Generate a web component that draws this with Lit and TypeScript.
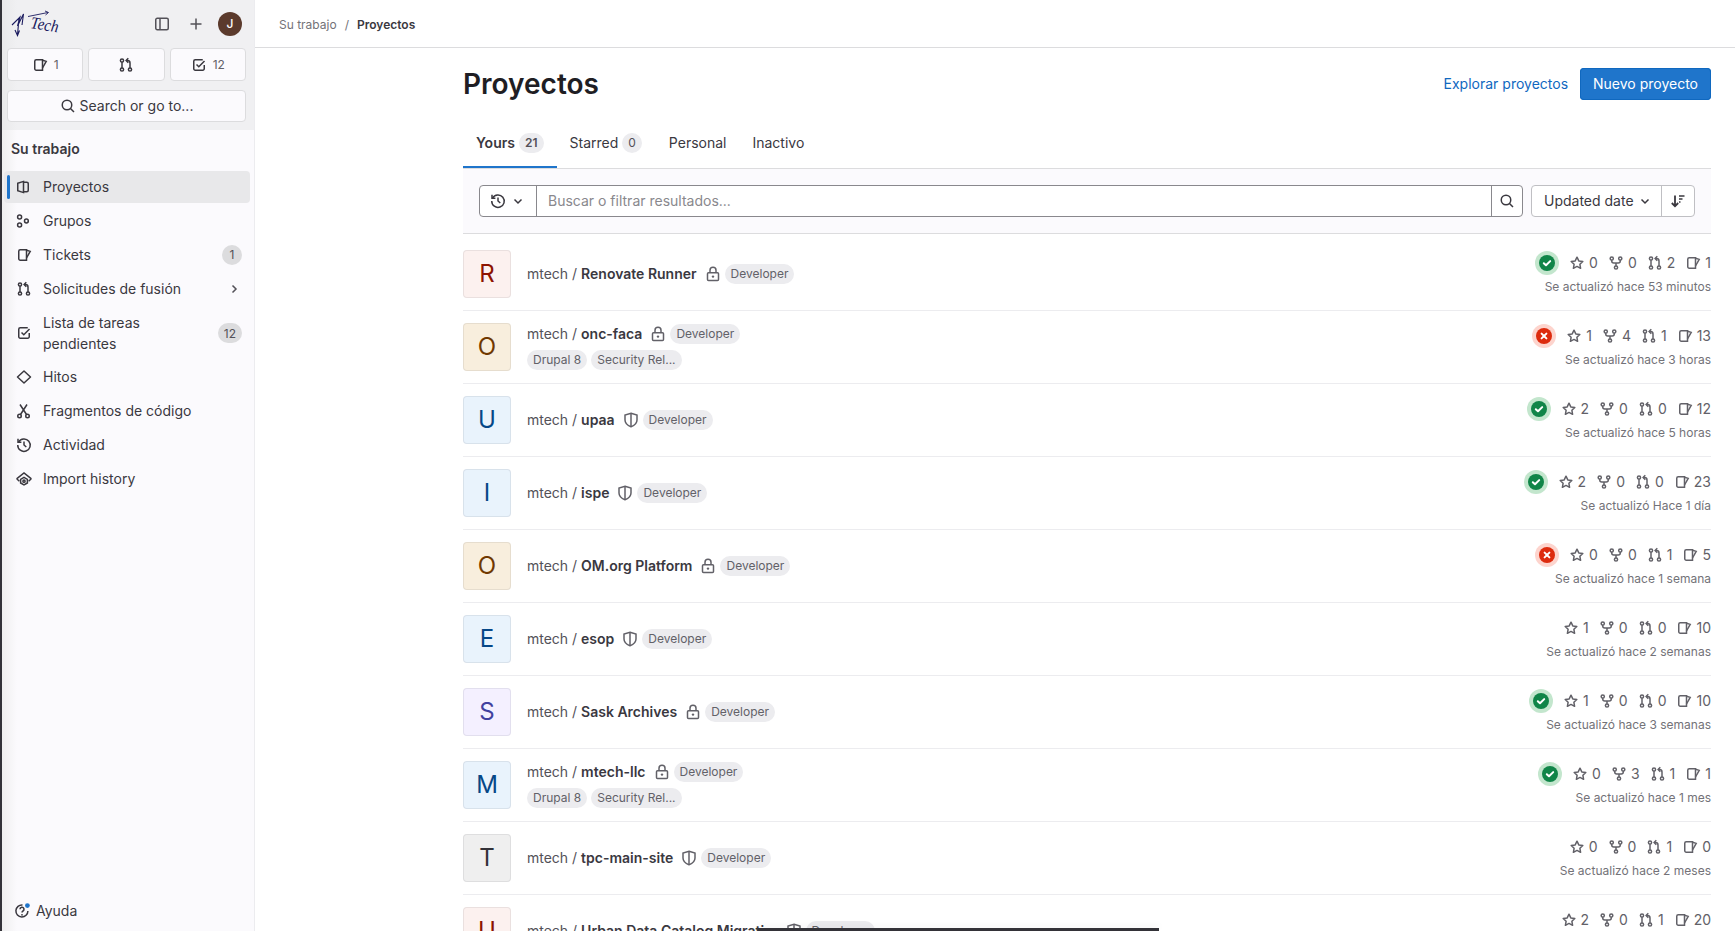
import { LitElement, html, css, svg, nothing } from "lit";
import { customElement } from "lit/decorators.js";

const ICONS: Record<string, unknown> = {
  issues: svg`<path d="M4.25 2.75H10.5V13.25H4.25A1.5 1.5 0 0 1 2.75 11.75V4.25A1.5 1.5 0 0 1 4.25 2.75Z"/><path d="M10.5 3.2L14.2 4.4 10.5 11"/>`,
  merge: svg`<circle cx="4" cy="3.5" r="1.6"/><circle cx="4" cy="12.5" r="1.6"/><path d="M4 5.1v5.8"/><circle cx="12" cy="12.5" r="1.6"/><path d="M12 10.9V6a2.5 2.5 0 0 0-2.5-2.5H8.5"/><path d="M10.3 1.3L8.1 3.5l2.2 2.2"/>`,
  todo: svg`<path d="M13.25 8v3.75a1.5 1.5 0 0 1-1.5 1.5h-7.5a1.5 1.5 0 0 1-1.5-1.5v-7.5a1.5 1.5 0 0 1 1.5-1.5h7.5"/><path d="M5.5 7.5l2.3 2.3 5.7-5.8"/>`,
  project: svg`<path d="M1.75 4.2L7.5 2.4v11.2l-5.75-1.8z"/><path d="M7.5 3.2h3.25a1.5 1.5 0 0 1 1.5 1.5v6.6a1.5 1.5 0 0 1-1.5 1.5H7.5"/>`,
  group: svg`<circle cx="3.6" cy="4" r="2"/><circle cx="3.6" cy="12" r="2"/><circle cx="10.4" cy="8" r="1.9"/>`,
  milestone: svg`<path d="M8 2L14.5 8 8 14 1.5 8z" stroke-linejoin="round"/>`,
  snippet: svg`<circle cx="3.5" cy="13" r="1.75"/><circle cx="11.5" cy="13" r="1.75"/><path d="M4.5 11.5L11 1.5M10.5 11.5L4 1.5"/>`,
  history: svg`<path d="M2.6 5A6.25 6.25 0 1 1 1.75 8"/><path d="M2 1.8v3.4h3.4"/><path d="M8 4.5V8l2.3 2"/>`,
  import: svg`<path d="M3.4 10.2L1.2 8.2a.6.6 0 0 1 0-.9L8 2l6.8 5.3a.6.6 0 0 1 0 .9l-2.200 2"/><path d="M8 6.4l3.4 2v3.6L8 14l-3.4-2V8.4z"/><circle cx="8" cy="10.2" r="1.1"/>`,
  search: svg`<circle cx="7" cy="7" r="4.75"/><path d="M10.5 10.5L14 14"/>`,
  sidebar: svg`<rect x="1.75" y="2.25" width="12.5" height="11.5" rx="1.5"/><path d="M6 2.5v11"/>`,
  plus: svg`<path d="M8 2.5v11M2.5 8h11"/>`,
  star: svg`<path d="M8 2.2l1.8 3.7 4 .6-2.9 2.8.7 4L8 11.4l-3.6 1.9.7-4L2.2 6.5l4-.6z" stroke-linejoin="round"/>`,
  fork: svg`<circle cx="3.75" cy="3.5" r="1.6"/><circle cx="12.25" cy="3.5" r="1.6"/><circle cx="8" cy="12.5" r="1.6"/><path d="M3.75 5.1V6a2 2 0 0 0 2 2h4.5a2 2 0 0 0 2-2v-.9M8 8v2.9"/>`,
  lock: svg`<rect x="2.5" y="6.75" width="11" height="7.75" rx="1"/><path d="M5 6.75V4.25a3 3 0 0 1 6 0v2.5"/><circle cx="8" cy="10.6" r="1.2" fill="currentColor" stroke="none"/>`,
  shield: svg`<path d="M8 1.2l6 1.9V8c0 3.2-2.5 5.4-6 6.8C4.5 13.4 2 11.200 2 8V3.100z"/><path d="M8 1.500v13"/>`,
  chevronDown: svg`<path d="M4.5 6.5L8 10l3.5-3.5"/>`,
  chevronRight: svg`<path d="M6.5 4.5L10 8l-3.5 3.5"/>`,
  sort: svg`<path d="M5 2.5V13.2M1.8 10l3.2 3.2L8.2 10" stroke-width="1.8"/><path d="M9 3h5.5M9 6h3.500M9 9h1.500"/>`,
  help: svg`<path d="M13.9 8A6 6 0 1 1 8.5 2"/><path d="M6 6.3a2 2 0 1 1 3 1.7c-.7.4-1 .8-1 1.6"/><circle cx="8" cy="11.8" r=".9" fill="currentColor" stroke="none"/><circle cx="13.4" cy="2.6" r="2.4" fill="#1f75cb" stroke="none"/>`,
};

const icon = (name: string) =>
  html`<svg class="icon" viewBox="0 0 16 16" fill="none" stroke="currentColor" stroke-width="1.5" aria-hidden="true">${ICONS[name]}</svg>`;

const NAV = [
  { label: "Proyectos", icon: "project", active: true },
  { label: "Grupos", icon: "group" },
  { label: "Tickets", icon: "issues", count: "1" },
  { label: "Solicitudes de fusión", icon: "merge", chevron: true },
  { label: "Lista de tareas pendientes", icon: "todo", count: "12" },
  { label: "Hitos", icon: "milestone" },
  { label: "Fragmentos de código", icon: "snippet" },
  { label: "Actividad", icon: "history" },
  { label: "Import history", icon: "import" },
];

const TAGS = ["Drupal 8", "Security Rel..."];

const PROJECTS = [
  { name: "Renovate Runner", tone: "red", vis: "lock", status: "ok", stats: [0, 0, 2, 1], time: "hace 53 minutos" },
  { name: "onc-faca", tone: "orange", vis: "lock", tags: TAGS, status: "fail", stats: [1, 4, 1, 13], time: "hace 3 horas" },
  { name: "upaa", tone: "blue", vis: "shield", status: "ok", stats: [2, 0, 0, 12], time: "hace 5 horas" },
  { name: "ispe", tone: "blue", vis: "shield", status: "ok", stats: [2, 0, 0, 23], time: "Hace 1 día" },
  { name: "OM.org Platform", tone: "orange", vis: "lock", status: "fail", stats: [0, 0, 1, 5], time: "hace 1 semana" },
  { name: "esop", tone: "blue", vis: "shield", stats: [1, 0, 0, 10], time: "hace 2 semanas" },
  { name: "Sask Archives", tone: "purple", vis: "lock", status: "ok", stats: [1, 0, 0, 10], time: "hace 3 semanas" },
  { name: "mtech-llc", tone: "blue", vis: "lock", tags: TAGS, status: "ok", stats: [0, 3, 1, 1], time: "hace 1 mes" },
  { name: "tpc-main-site", tone: "grey", vis: "shield", stats: [0, 0, 1, 0], time: "hace 2 meses" },
  { name: "Urban Data Catalog Migrati...", tone: "red", vis: "shield", stats: [2, 0, 1, 20], time: "hace 2 meses" },
];

const STAT_ICONS = ["star", "fork", "merge", "issues"];

@customElement("app-root")
export class AppRoot extends LitElement {
  static styles = css`
    :host {
      display: flex;
      height: 100vh;
      overflow: hidden;
      position: relative;
      background: #fff;
      color: #3a383f;
      font-family: Inter, "Noto Sans", sans-serif;
      font-size: 14px;
      line-height: 20px;
    }
    .icon {
      display: block;
      flex: none;
      width: 16px;
      height: 16px;
    }

    /* sidebar */
    .sidebar {
      flex: none;
      box-sizing: border-box;
      width: 255px;
      display: flex;
      flex-direction: column;
      border-left: 2px solid #333238;
      border-right: 1px solid #ececef;
      background: linear-gradient(90deg, #efefef 0, #fbfafd 15px) #fbfafd;
    }
    .side-top {
      height: 130px;
      box-sizing: border-box;
      padding: 0 8px 0 5px;
      background: linear-gradient(90deg, #e9e9ea 0, #f0f0f2 15px) #f0f0f2;
    }
    .brand {
      display: flex;
      align-items: center;
      height: 48px;
      color: #535158;
    }
    .logo {
      width: 52px;
      height: 32px;
      margin-left: 3px;
      margin-right: auto;
      color: #1a1a5e;
    }
    .brand-btn {
      margin-right: 18px;
    }
    .brand-btn + .brand-btn {
      margin-right: 14px;
    }
    .user {
      width: 24px;
      height: 24px;
      margin-right: 4px;
      border-radius: 50%;
      background: #5b3a2c;
      color: #fff;
      font-size: 12px;
      font-weight: 500;
      display: grid;
      place-items: center;
    }
    .counters {
      display: grid;
      grid-template-columns: repeat(3, 1fr);
      gap: 5px;
    }
    .counter,
    .search {
      box-sizing: border-box;
      display: flex;
      align-items: center;
      justify-content: center;
      background: #fbfafd;
      border: 1px solid #dcdcde;
      border-radius: 4px;
    }
    .counter {
      height: 33px;
      gap: 6px;
      font-size: 12px;
      color: #626168;
    }
    .counter .icon {
      color: #3a383f;
    }
    .search {
      height: 32px;
      margin-top: 9px;
      gap: 4px;
      color: #3a383f;
    }
    .nav-title {
      margin: 9px 0 0 9px;
      font-weight: 600;
      height: 24px;
      line-height: 20px;
    }
    .nav {
      display: flex;
      flex-direction: column;
      gap: 2px;
      margin: 8px 4px 0 2px;
    }
    .item {
      display: flex;
      align-items: center;
      min-height: 32px;
      padding: 0 8px 0 12px;
      border-radius: 4px;
      gap: 11px;
      position: relative;
    }
    .item.two {
      padding-block: 5px;
      line-height: 21px;
    }
    .item.active {
      background: #e8e8ea;
    }
    .item.active::before {
      content: "";
      position: absolute;
      left: 3px;
      top: 4px;
      bottom: 4px;
      width: 3px;
      border-radius: 2px;
      background: #1f75cb;
    }
    .item-label {
      flex: 1;
    }
    .nav-count {
      min-width: 20px;
      box-sizing: border-box;
      height: 20px;
      padding: 0 6px;
      border-radius: 10px;
      background: #dcdcde;
      font-size: 12px;
      color: #535158;
      text-align: center;
    }
    .chev {
      color: #535158;
    }
    .help {
      margin: auto 0 0 12px;
      height: 40px;
      display: flex;
      align-items: center;
      gap: 6px;
    }

    /* main */
    .main {
      flex: 1;
      min-width: 0;
      display: flex;
      flex-direction: column;
      overflow: hidden;
    }
    .crumbs {
      flex: none;
      box-sizing: border-box;
      height: 48px;
      padding: 2px 0 0 24px;
      border-bottom: 1px solid #dcdcde;
      display: flex;
      align-items: center;
      gap: 8px;
      font-size: 12px;
      color: #737278;
    }
    .crumbs b {
      font-weight: 600;
      color: #3a383f;
    }
    .content {
      width: 1248px;
      margin-left: auto;
      margin-right: 24px;
    }
    .title-row {
      height: 77px;
      display: flex;
      align-items: center;
      padding-bottom: 6px;
      box-sizing: border-box;
    }
    h1 {
      margin: 0 auto 0 0;
      font-size: 28px;
      line-height: 36px;
      font-weight: 600;
      color: #1f1e24;
    }
    .explore {
      color: #1068bf;
      margin-right: 12px;
    }
    .primary {
      height: 32px;
      padding: 0 13px;
      display: flex;
      align-items: center;
      border-radius: 4px;
      background: #1f75cb;
      box-shadow: inset 0 0 0 1px #1068bf;
      color: #fff;
    }
    .tabs {
      display: flex;
      height: 44px;
      box-sizing: border-box;
      border-bottom: 1px solid #dcdcde;
    }
    .tab {
      display: flex;
      align-items: center;
      gap: 4px;
      padding: 0 13px 8px;
      height: 43px;
      box-sizing: border-box;
    }
    .tab:nth-child(2) {
      padding-right: 14px;
    }
    .tab.active {
      font-weight: 600;
      box-shadow: inset 0 -2px 0 #1f75cb;
    }
    .pill {
      border-radius: 10px;
      background: #ececef;
      font-size: 12px;
      font-weight: 400;
      color: #535158;
      height: 20px;
      padding: 0 6px;
    }
    .tab.active .pill {
      font-weight: 600;
    }
    .filter-bar {
      display: flex;
      align-items: center;
      gap: 8px;
      height: 65px;
      box-sizing: border-box;
      padding: 0 16px;
      background: #fbfafd;
      border-bottom: 1px solid #dcdcde;
    }
    .filter {
      flex: 1;
      display: flex;
      height: 32px;
      box-sizing: border-box;
      background: #fff;
      border: 1px solid #89888d;
      border-radius: 4px;
    }
    .recent {
      width: 56px;
      flex: none;
      display: flex;
      align-items: center;
      justify-content: center;
      gap: 4px;
      border-right: 1px solid #89888d;
    }
    .placeholder {
      flex: 1;
      padding-left: 11px;
      line-height: 30px;
      color: #89888d;
    }
    .go {
      width: 31px;
      box-sizing: border-box;
      flex: none;
      display: grid;
      place-items: center;
      border-left: 1px solid #89888d;
    }
    .sort {
      display: flex;
      height: 32px;
      box-sizing: border-box;
      background: #fff;
      border: 1px solid #bfbfc3;
      border-radius: 4px;
    }
    .sort-by {
      display: flex;
      align-items: center;
      justify-content: space-between;
      padding: 0 8px 0 12px;
      width: 130px;
      box-sizing: border-box;
      white-space: nowrap;
      border-right: 1px solid #bfbfc3;
    }
    .sort-dir {
      width: 32px;
      display: grid;
      place-items: center;
    }

    /* project rows */
    .row {
      display: flex;
      align-items: center;
      padding: 12px 0;
      border-bottom: 1px solid #ececef;
    }
    .row:first-child {
      padding-top: 16px;
    }
    .avatar {
      flex: none;
      width: 48px;
      height: 48px;
      border-radius: 4px;
      box-shadow: inset 0 0 0 1px rgba(31, 30, 36, 0.08);
      display: grid;
      place-items: center;
      font-size: 24px;
      margin-right: 16px;
    }
    .red { background: #fcf1ef; color: #8d1300; }
    .orange { background: #f8eedd; color: #703800; }
    .blue { background: #e9f3fc; color: #064787; }
    .purple { background: #f4f0ff; color: #41419f; }
    .grey { background: #efefef; color: #333238; }
    .info {
      flex: 1;
      min-width: 0;
    }
    .line {
      display: flex;
      align-items: center;
      height: 20px;
      gap: 8px;
      color: #535158;
    }
    .line b {
      font-weight: 600;
      color: #3a383f;
    }
    .vis {
      color: #626168;
      margin-right: -4px;
    }
    .tag {
      height: 20px;
      padding: 0 6px;
      border-radius: 10px;
      background: #ececef;
      color: #626168;
      font-size: 12px;
    }
    .tags {
      display: flex;
      gap: 4px;
      margin-top: 6px;
    }
    .meta {
      flex: none;
      align-self: flex-start;
      text-align: right;
    }
    .stats {
      display: flex;
      align-items: center;
      justify-content: flex-end;
      height: 26px;
      gap: 10px;
      color: #626168;
    }
    .stat {
      display: flex;
      align-items: center;
      gap: 4px;
    }
    .status {
      width: 24px;
      height: 24px;
      border-radius: 50%;
      display: grid;
      place-items: center;
    }
    .status.ok { background: #c3e6cd; color: #108548; }
    .status.fail { background: #fdd4cd; color: #dd2b0e; }
    .status svg {
      width: 16px;
      height: 16px;
      display: block;
    }
    .time {
      margin-top: 1px;
      font-size: 12px;
      color: #737278;
    }

    /* browser chrome peeking in at the bottom edge */
    .edge {
      position: absolute;
      left: 758px;
      bottom: 0;
      width: 401px;
      height: 3px;
      background: #333238;
      box-shadow: 0 -3px 6px rgba(0, 0, 0, 0.06);
    }
  `;

  private renderStatus(status?: string) {
    if (!status) return nothing;
    return html`<span class="status ${status}">
      <svg viewBox="0 0 16 16" aria-hidden="true">
        <circle cx="8" cy="8" r="8" fill="currentColor" />
        ${status === "ok"
          ? svg`<path d="M4.8 8.2l2.2 2.1 4.2-4.2" fill="none" stroke="#fff" stroke-width="2" stroke-linecap="round" stroke-linejoin="round"/>`
          : svg`<path d="M5.6 5.6l4.8 4.8M10.4 5.6l-4.8 4.8" fill="none" stroke="#fff" stroke-width="2" stroke-linecap="round"/>`}
      </svg>
    </span>`;
  }

  private renderRow(p: (typeof PROJECTS)[number]) {
    return html`<div class="row">
      <div class="avatar ${p.tone}">${p.name[0].toUpperCase()}</div>
      <div class="info">
        <div class="line">
          <span>mtech / <b>${p.name}</b></span>
          <span class="vis">${icon(p.vis)}</span>
          <span class="tag">Developer</span>
        </div>
        ${p.tags
          ? html`<div class="tags">${p.tags.map((t) => html`<span class="tag">${t}</span>`)}</div>`
          : nothing}
      </div>
      <div class="meta">
        <div class="stats">
          ${this.renderStatus(p.status)}
          ${p.stats.map(
            (n, i) => html`<span class="stat">${icon(STAT_ICONS[i])}${n}</span>`,
          )}
        </div>
        <div class="time">Se actualizó ${p.time}</div>
      </div>
    </div>`;
  }

  render() {
    return html`
      <aside class="sidebar">
        <div class="side-top">
          <div class="brand">
            <svg class="logo" viewBox="0 0 52 32" aria-label="MTech logo">
              <path d="M2 17l8-8-2.500 9 6-12-1.500 11M9 10L7.500 27m-2.500-5l2.500 5.500 2-5" fill="none" stroke="currentColor" stroke-width="1.1"/>
              <path d="M18 8.500l20-4m-3-1.500l3.500 1.500-3 2.500" fill="none" stroke="currentColor" stroke-width="0.9"/>
              <text x="20" y="20" font-family="Liberation Serif" font-style="italic" font-size="17" fill="currentColor" textLength="28" lengthAdjust="spacingAndGlyphs" transform="rotate(9 20 20)">Tech</text>
            </svg>
            <span class="brand-btn">${icon("sidebar")}</span>
            <span class="brand-btn">${icon("plus")}</span>
            <span class="user">J</span>
          </div>
          <div class="counters">
            <div class="counter">${icon("issues")}1</div>
            <div class="counter">${icon("merge")}</div>
            <div class="counter">${icon("todo")}12</div>
          </div>
          <div class="search">${icon("search")}Search or go to...</div>
        </div>
        <div class="nav-title">Su trabajo</div>
        <nav class="nav">
          ${NAV.map(
            (n) => html`<div class="item ${n.active ? "active" : ""} ${n.label.length > 22 ? "two" : ""}">
              ${icon(n.icon)}
              <span class="item-label">${n.label}</span>
              ${n.count ? html`<span class="nav-count">${n.count}</span>` : nothing}
              ${n.chevron ? html`<span class="chev">${icon("chevronRight")}</span>` : nothing}
            </div>`,
          )}
        </nav>
        <div class="help">${icon("help")}Ayuda</div>
      </aside>
      <main class="main">
        <div class="crumbs"><span>Su trabajo</span><span>/</span><b>Proyectos</b></div>
        <div class="content">
          <div class="title-row">
            <h1>Proyectos</h1>
            <span class="explore">Explorar proyectos</span>
            <span class="primary">Nuevo proyecto</span>
          </div>
          <div class="tabs">
            <div class="tab active">Yours <span class="pill">21</span></div>
            <div class="tab">Starred <span class="pill">0</span></div>
            <div class="tab">Personal</div>
            <div class="tab">Inactivo</div>
          </div>
          <div class="filter-bar">
            <div class="filter">
              <div class="recent">${icon("history")}${icon("chevronDown")}</div>
              <div class="placeholder">Buscar o filtrar resultados...</div>
              <div class="go">${icon("search")}</div>
            </div>
            <div class="sort">
              <div class="sort-by">Updated date ${icon("chevronDown")}</div>
              <div class="sort-dir">${icon("sort")}</div>
            </div>
          </div>
          <div class="rows">${PROJECTS.map((p) => this.renderRow(p))}</div>
        </div>
      </main>
      <div class="edge"></div>
    `;
  }
}
